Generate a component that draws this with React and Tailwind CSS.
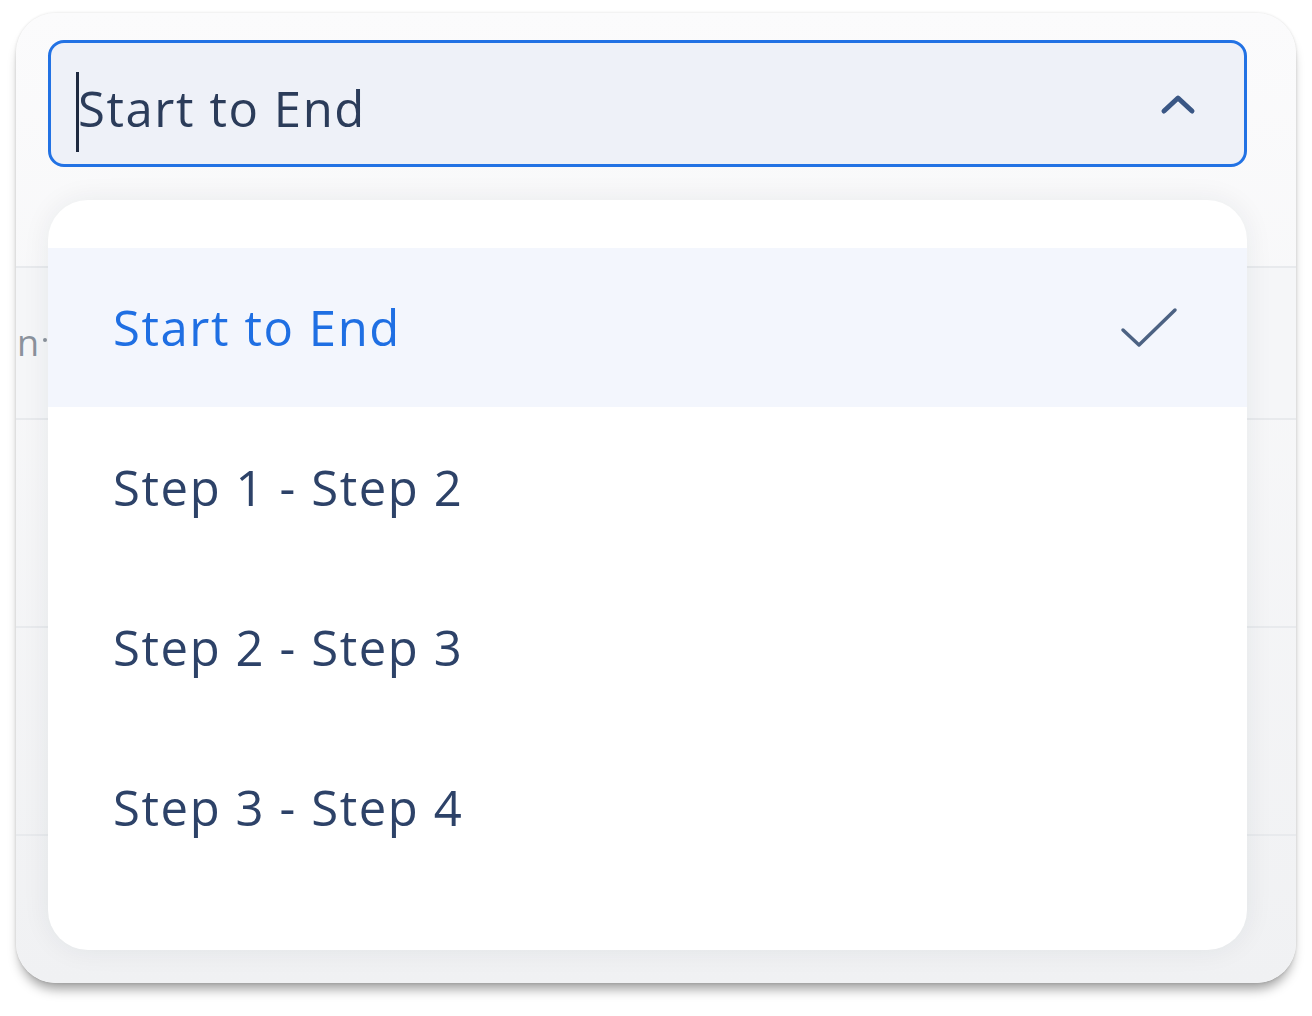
import React from "react";

const options = ["Start to End", "Step 1 - Step 2", "Step 2 - Step 3", "Step 3 - Step 4"];

function ChevronUp() {
  return (
    <svg width="36" height="22" viewBox="0 0 36 22" fill="none">
      <polyline
        points="4,18 18,5 32,18"
        stroke="#3a5785"
        strokeWidth="5"
        strokeLinecap="round"
        strokeLinejoin="round"
      />
    </svg>
  );
}

function Check() {
  return (
    <svg width="60" height="46" viewBox="0 0 60 46" fill="none">
      <polyline
        points="4,25 20,40 56,5"
        stroke="#4c6283"
        strokeWidth="3.5"
        strokeLinecap="round"
        strokeLinejoin="round"
      />
    </svg>
  );
}

export default function App() {
  const selected = 0;

  return (
    <div className="min-h-screen bg-white pt-[13px] pl-[16px] font-['Open_Sans',sans-serif]">
      {/* Card */}
      <div className="relative w-[1280px] h-[970px] rounded-[40px] bg-gradient-to-b from-[#fbfbfc] to-[#f0f1f3] shadow-[0_10px_12px_-4px_rgba(0,0,0,0.38),0_0_3px_rgba(0,0,0,0.14)] overflow-hidden">
        {/* Select input */}
        <div className="pt-[27px] pl-[32px] pr-[49px]">
          <div className="relative h-[127px] rounded-[16px] border-[3px] border-[#2272e4] bg-[#eef1f8] flex items-center pl-[27px] pr-[48px]">
            <span className="absolute left-[25px] top-[29px] w-[3px] h-[80px] bg-[#1e2a40]" />
            <span className="pt-[10px] text-[49px] font-medium tracking-[1.6px] text-[#2b3c5a] leading-none">
              Start to End
            </span>
            <div className="ml-auto">
              <ChevronUp />
            </div>
          </div>
        </div>

        {/* Table underneath the menu */}
        <div className="mt-[99px]">
          <div className="h-[152px] border-t-2 border-[#e8eaed] bg-[#f5f6f8] flex items-center pl-px">
            <span className="text-[36px] text-[#8b929c] leading-none">n</span>
            <span className="ml-[4px] w-[4px] h-[4px] rounded-full bg-[#8b929c] -mt-[6px]" />
          </div>
          <div className="h-[208px] border-t-2 border-[#e8eaed]" />
          <div className="h-[208px] border-t-2 border-[#e8eaed]" />
          <div className="h-[120px] border-t-2 border-[#e8eaed]" />
        </div>

        {/* Dropdown menu */}
        <div className="absolute left-[32px] top-[187px] w-[1199px] h-[750px] rounded-[40px] bg-white shadow-[0_0_28px_rgba(30,40,60,0.07)] pt-[48px] overflow-hidden">
          {options.map((opt, i) => (
            <div
              key={opt}
              className={
                i === selected
                  ? "h-[159px] bg-[#f3f6fd] flex items-center pl-[65px] pr-[68px]"
                  : "h-[160px] flex items-center pl-[65px] pr-[68px]"
              }
            >
              <span
                className={
                  i === selected
                    ? "text-[49px] font-medium tracking-[1.6px] text-[#1f6fe3] leading-none"
                    : "text-[49px] font-medium tracking-[1.6px] text-[#2d4268] leading-none"
                }
              >
                {opt}
              </span>
              {i === selected && (
                <div className="ml-auto">
                  <Check />
                </div>
              )}
            </div>
          ))}
        </div>
      </div>
    </div>
  );
}
